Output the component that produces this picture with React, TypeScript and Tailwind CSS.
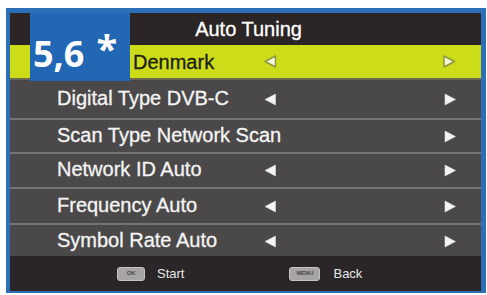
type Row = {
  label: string;
  height: string;
};

const rows: Row[] = [
  { label: "Digital Type DVB-C", height: "h-[38px]" },
  { label: "Scan Type Network Scan", height: "h-[34px] border-t-2" },
  { label: "Network ID Auto", height: "h-[35px] border-t-2" },
  { label: "Frequency Auto", height: "h-[36px] border-t-2" },
  { label: "Symbol Rate Auto", height: "h-[33px] border-t-2" },
];

function Arrow({ dir, hollow }: { dir: "left" | "right"; hollow?: boolean }) {
  const points = dir === "left" ? "11.5,1 11.5,12 1,6.5" : "1,1 1,12 11.5,6.5";
  return (
    <svg width="13" height="13" viewBox="0 0 13 13" className="shrink-0">
      <polygon
        points={points}
        fill={hollow ? "#f3f5dc" : "#f4f4f4"}
        stroke={hollow ? "#8f9540" : "#dcdcdc"}
        strokeWidth={hollow ? 1.5 : 0.6}
        strokeLinejoin="round"
      />
    </svg>
  );
}

function KeyButton({ label, width }: { label: string; width: string }) {
  return (
    <span
      className={`${width} h-[14px] rounded-[3px] bg-[#a6a4a4] border border-[#c4c2c2] flex items-center justify-center text-[6px] font-bold tracking-tight text-[#4a4848]`}
    >
      {label}
    </span>
  );
}

export default function App() {
  return (
    <div className="w-[487px] h-[295px] bg-white pt-[8px] pl-[6px] font-['Liberation_Sans',Arial,sans-serif]">
      <div className="w-[480px] h-[285px] bg-[#2c6fb6] pt-[5px] pl-[4px] pr-[5px] pb-[2px]">
        <div className="relative w-[471px] h-[278px] flex flex-col">
          {/* Title bar */}
          <div className="h-[32px] bg-[#2b2526] flex items-center justify-center pl-[6px] text-[20px] text-white [-webkit-text-stroke:0.3px_white]">
            Auto Tuning
          </div>

          {/* Selected row */}
          <div className="h-[35px] bg-[#cddc18] border-b-2 border-[#6a6a50] grid">
            <div className="col-start-1 row-start-1 flex items-center pl-[123px] text-[20px] text-[#1d1d10] [-webkit-text-stroke:0.3px_#1d1d10]">
              Denmark
            </div>
            <div className="col-start-1 row-start-1 flex items-center">
              <div className="ml-[254px]">
                <Arrow dir="left" hollow />
              </div>
              <div className="ml-[166px]">
                <Arrow dir="right" hollow />
              </div>
            </div>
          </div>

          {/* Setting rows */}
          {rows.map((row) => (
            <div
              key={row.label}
              className={`${row.height} bg-[#4a4848] border-[#747272] grid`}
            >
              <div className="col-start-1 row-start-1 flex items-center pl-[47px] pb-[3px] text-[20px] text-[#f4f4f4] whitespace-nowrap [-webkit-text-stroke:0.3px_#f4f4f4]">
                {row.label}
              </div>
              <div className="col-start-1 row-start-1 flex items-center">
                {row.label.startsWith("Scan") ? null : (
                  <div className="ml-[254px]">
                    <Arrow dir="left" />
                  </div>
                )}
                <div
                  className={
                    row.label.startsWith("Scan") ? "ml-[434px]" : "ml-[167px]"
                  }
                >
                  <Arrow dir="right" />
                </div>
              </div>
            </div>
          ))}

          {/* Footer */}
          <div className="flex-1 bg-[#2a2526] flex items-center text-[13px] text-[#e8e8e8]">
            <div className="ml-[107px]">
              <KeyButton label="OK" width="w-[28px]" />
            </div>
            <span className="ml-[12px]">Start</span>
            <div className="ml-[105px]">
              <KeyButton label="MENU" width="w-[31px]" />
            </div>
            <span className="ml-[13px]">Back</span>
          </div>

          {/* Step badge */}
          <div className="absolute left-[20px] top-0 w-[100px] h-[68px] bg-[#2267b4] flex items-center pl-[3px] pt-[14px] text-white font-['Open_Sans',sans-serif] font-bold text-[36px] leading-none">
            <span>5,6</span>
            <span className="ml-[12px] -mt-[12px] text-[38px]">*</span>
          </div>
        </div>
      </div>
    </div>
  );
}
